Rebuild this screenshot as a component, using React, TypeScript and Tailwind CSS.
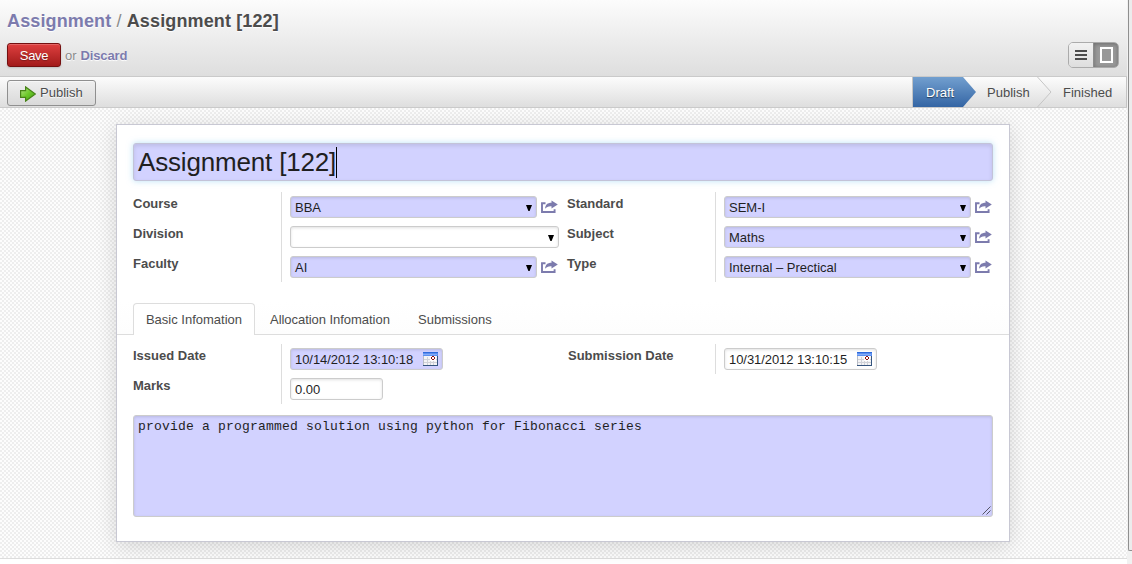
import React from "react";

const FIELD_SHADOW = "shadow-[inset_0_1px_3px_rgba(0,0,0,0.12)]";

function OpenIcon() {
  return (
    <svg width="18" height="14" viewBox="0 0 18 14" className="mr-px ml-[3px] shrink-0">
      <path d="M5.5 3.2H2V12h12.6V9.3" fill="none" stroke="#7c7bad" strokeWidth="1.9" />
      <path d="M5.2 8.8C5.2 4.8 7.5 2.8 11.5 2.8V.6l6.3 4-6.3 4V6.2C8.5 6 6.5 6.8 5.2 8.8Z" fill="#7c7bad" />
    </svg>
  );
}

function CalendarIcon() {
  return (
    <svg width="15" height="14" viewBox="0 0 15 14" className="shrink-0" shapeRendering="crispEdges">
      <rect width="15" height="14" fill="#35557f" />
      <rect width="14" height="13" fill="#b9bdc6" />
      <rect x="1" y="4" width="13" height="9" fill="#f4f4f6" />
      <rect width="15" height="4" fill="#5b8ff0" />
      <rect width="15" height="1" fill="#2f6bdc" />
      <rect y="2" width="14" height="1" fill="#86acf6" />
      <path d="M4.5 5v8M7.5 5v8M10.5 5v8M1 7.5h13M1 10.5h13" stroke="#d0d2d8" />
      <rect x="7" y="4" width="6" height="5" fill="#fff" />
      <path d="M9 4h2v1H9zM8 5h1v2H8zM11 5h1v2h-1zM9 7h2v1H9z" fill="#8e1010" />
    </svg>
  );
}

function Select({ label, value, open = true }: { label: string; value: string; open?: boolean }) {
  return (
    <div className="flex h-[30px]">
      <label className="w-[157px] shrink-0 pt-1 text-[13px] leading-4 font-bold">{label}</label>
      <div className="mt-1 flex h-[22px] w-[269px] items-center">
        <div
          className={`flex h-[22px] flex-1 items-center justify-between rounded-[3px] border border-[#ccc] pr-1 pl-1 text-[13px] text-[#1f1f1f] ${FIELD_SHADOW} ${
            value ? "bg-[#d2d2ff]" : "bg-white"
          }`}
        >
          <span className="pt-px">{value}</span>
          <svg width="6" height="6" viewBox="0 0 6 6" className="mt-px">
            <path d="M0 0h6L3.6 6H2.4Z" fill="#000" />
          </svg>
        </div>
        {open && <OpenIcon />}
      </div>
    </div>
  );
}

function DateField({ value, required = false }: { value: string; required?: boolean }) {
  return (
    <div
      className={`mt-1 flex h-[22px] w-[153px] items-center justify-between rounded-[3px] border border-[#ccc] pr-1 pl-1 text-[13px] tracking-[-0.06px] text-[#1f1f1f] ${FIELD_SHADOW} ${
        required ? "bg-[#d2d2ff]" : "bg-white"
      }`}
    >
      <span className="pt-px">{value}</span>
      <CalendarIcon />
    </div>
  );
}

function Group({ children, divider }: { children: React.ReactNode; divider: string }) {
  return (
    <div className="flex w-[434px]">
      <div className={`-mr-[149px] w-[149px] border-r border-[#ddd] ${divider}`} />
      <div>{children}</div>
    </div>
  );
}

export default function App() {
  return (
    <div className="flex h-[564px] w-[1132px] overflow-hidden bg-white font-['Liberation_Sans',Arial,sans-serif] text-[13px] text-[#4c4c4c]">
      <main className="flex w-[1127px] flex-col">
        <header className="flex h-[77px] shrink-0 justify-between border-b border-[#cacaca] bg-linear-to-b from-[#fcfcfc] to-[#dedede] pr-2 pl-[7px]">
          <div className="[text-shadow:0_1px_1px_#fff]">
            <h1 className="mt-2.5 h-[22px] text-[18px] leading-[22px] font-bold tracking-[0.13px] whitespace-nowrap">
              <span className="text-[#7c7bad]">Assignment</span>
              <span className="font-normal text-[#8a8a8a]"> / </span>
              <span>Assignment [122]</span>
            </h1>
            <div className="mt-[11px] flex h-6 items-center">
              <button className="h-6 w-[54px] rounded-[3px] border border-[#751010] bg-linear-to-b from-[#df3f3f] to-[#a21a1a] pt-px text-[13px] tracking-[-0.3px] text-white shadow-[inset_0_1px_0_rgba(255,255,255,0.2),0_1px_2px_rgba(0,0,0,0.15)] [text-shadow:0_1px_1px_rgba(0,0,0,0.3)]">
                Save
              </button>
              <span className="ml-1 pt-px">
                <span className="text-[#8a8a8a]">or</span>
                <a className="ml-1 font-bold tracking-[-0.15px] text-[#7c7bad]">Discard</a>
              </span>
            </div>
          </div>
          <div className="mt-[42px] flex h-[26px] w-[51px] overflow-hidden rounded-[5px] border border-[#ababab]">
            <div className="flex w-6 items-center justify-center bg-linear-to-b from-[#f2f2f2] to-[#dedede]">
              <svg width="12" height="10" viewBox="0 0 12 10" shapeRendering="crispEdges">
                <path d="M0 0h12v2H0zM0 4h12v2H0zM0 8h12v2H0z" fill="#4c4c4c" />
              </svg>
            </div>
            <div className="flex flex-1 items-center justify-center border-l border-[#8c8c8c] bg-[#999] shadow-[inset_0_1px_4px_rgba(0,0,0,0.3)]">
              <svg width="13" height="16" viewBox="0 0 13 16" shapeRendering="crispEdges">
                <rect x="1" y="1" width="11" height="14" fill="none" stroke="#fff" strokeWidth="2" />
              </svg>
            </div>
          </div>
        </header>

        <nav className="flex h-[31px] shrink-0 justify-between border-b border-[#cacaca] bg-linear-to-b from-[#fcfcfc] to-[#dedede] pl-[7px]">
          <button className="mt-[3px] flex h-[26px] w-[89px] items-center rounded-[3px] border border-[#8f8f8f] bg-linear-to-b from-[#efefef] to-[#d9d9d9] pl-3 text-[13px] shadow-[inset_0_1px_0_rgba(255,255,255,0.5)] [text-shadow:0_1px_1px_#fff]">
            <svg width="16" height="16" viewBox="0 0 16 16" className="mt-px mr-1">
              <defs>
                <linearGradient id="go" x1="0" x2="1" y1="0" y2="1">
                  <stop offset="0" stopColor="#b8e68a" />
                  <stop offset="0.5" stopColor="#6cc82a" />
                  <stop offset="1" stopColor="#3f9a12" />
                </linearGradient>
              </defs>
              <path d="M.6 4.6h5V.9L15.4 8l-9.8 7.1v-3.7h-5Z" fill="url(#go)" stroke="#478318" strokeWidth="1.2" />
            </svg>
            <span className="-mt-px">Publish</span>
          </button>
          <div className="flex h-[30px] w-[215px] border-r border-l border-[#c4c4c4]">
            <svg width="213" height="30" viewBox="0 0 213 30" className="-mr-[213px] shrink-0">
              <defs>
                <linearGradient id="stage" x2="0" y2="1">
                  <stop stopColor="#729fcf" />
                  <stop offset="1" stopColor="#3465a4" />
                </linearGradient>
              </defs>
              <path d="M0 0h50l13 15-13 15H0Z" fill="url(#stage)" />
              <path d="M124.5 0l13.5 15-13.5 15" fill="none" stroke="#c5c5c5" />
            </svg>
            <ol className="relative flex h-[30px] items-center pt-px whitespace-nowrap">
              <li className="ml-[13px] w-[61px] text-white [text-shadow:0_1px_1px_rgba(0,0,0,0.5)]">Draft</li>
              <li className="w-[76px]">Publish</li>
              <li>Finished</li>
            </ol>
          </div>
        </nav>

        <div className="h-[451px] shrink-0 border-b border-[#ddd] bg-[repeating-conic-gradient(#eeeeee_0_25%,#fdfdfd_0_50%)] bg-size-[4px_4px] pt-4 pl-[116px]">
          <section className="flex h-[418px] w-[894px] flex-col border border-[#c8c8d3] bg-white shadow-[0_4px_20px_rgba(0,0,0,0.15)]">
            <div className="mx-4 mt-[18px] flex h-[38px] shrink-0 items-center rounded-[3px] border border-[#c3c3d8] bg-[#d2d2ff] pl-1 text-[26px] tracking-[-0.17px] text-[#1f1f1f] shadow-[inset_0_2px_4px_rgba(0,0,0,0.1),0_0_6px_rgba(130,200,240,0.55)]">
              <span className="whitespace-nowrap">Assignment [122]</span>
              <span className="h-[31px] w-px bg-black" />
            </div>
            <div className="mt-[11px] ml-4 flex h-[90px] shrink-0">
              <Group divider="h-[90px]">
                <Select label="Course" value="BBA" />
                <Select label="Division" value="" open={false} />
                <Select label="Faculty" value="AI" />
              </Group>
              <Group divider="h-[90px]">
                <Select label="Standard" value="SEM-I" />
                <Select label="Subject" value="Maths" />
                <Select label="Type" value="Internal – Prectical" />
              </Group>
            </div>
            <div className="mt-5 flex h-[33px] shrink-0 border-b border-[#ddd] bg-linear-to-b from-white to-[#fdfdfd] px-4 pt-px leading-[33px]">
              <div className="h-8 w-[122px] rounded-t-[4px] border border-b-0 border-[#ddd] bg-white text-center leading-[31px] [box-shadow:0_1px_0_#fff]">Basic Infomation</div>
              <div className="ml-[15px] w-[148px] tracking-[-0.04px]">Allocation Infomation</div>
              <div>Submissions</div>
            </div>
            <div className="mt-[9px] ml-4 flex h-[60px] shrink-0">
              <Group divider="h-[60px]">
                <div className="flex h-[30px]">
                  <label className="w-[157px] pt-1 leading-4 font-bold">Issued Date</label>
                  <DateField value="10/14/2012 13:10:18" required />
                </div>
                <div className="flex h-[30px]">
                  <label className="w-[157px] pt-1 leading-4 font-bold">Marks</label>
                  <div className={`mt-1 flex h-[22px] w-[93px] items-center rounded-[3px] border border-[#ccc] bg-white pt-px pl-1 text-[#1f1f1f] ${FIELD_SHADOW}`}>0.00</div>
                </div>
              </Group>
              <Group divider="h-[30px]">
                <div className="flex h-[30px]">
                  <label className="w-[157px] pt-1 pl-px leading-4 font-bold">Submission Date</label>
                  <DateField value="10/31/2012 13:10:15" />
                </div>
              </Group>
            </div>
            <div className={`mx-4 mt-[11px] flex h-[102px] shrink-0 flex-col justify-between rounded-[3px] border border-[#ccc] bg-[#d2d2ff] pt-[3px] pl-1 font-['Liberation_Mono','Courier_New',monospace] text-[13px] leading-4 tracking-[0.2px] text-[#1f1f1f] ${FIELD_SHADOW}`}>
              <span>provide a programmed solution using python for Fibonacci series</span>
              <svg width="9" height="9" viewBox="0 0 9 9" className="mr-px mb-px self-end">
                <path d="M.5 8.5l8-8M4.5 8.5l4-4" stroke="#555566" />
              </svg>
            </div>
          </section>
        </div>
      </main>
      <aside className="w-[5px] bg-[#f1f1f1] pl-px">
        <div className="h-[551px] rounded-bl-[2px] border-b border-l border-[#8f8f8f] bg-[#ececec]" />
      </aside>
    </div>
  );
}
